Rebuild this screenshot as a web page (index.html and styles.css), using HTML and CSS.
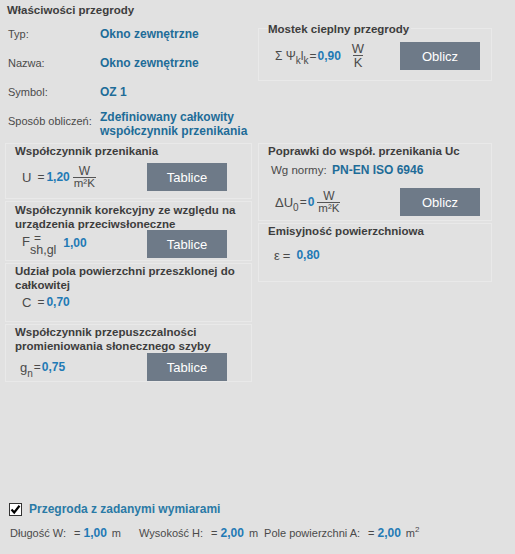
FILE: index.html
```html
<!DOCTYPE html>
<html lang="pl">
<head>
<meta charset="utf-8">
<title>Właściwości przegrody</title>
<link rel="stylesheet" href="styles.css">
</head>
<body>
<div class="page">
  <div class="head">Właściwości przegrody</div>
  <div class="top">
    <div class="props">
      <div class="prow"><span class="lbl">Typ:</span><span class="val">Okno zewnętrzne</span></div>
      <div class="prow"><span class="lbl">Nazwa:</span><span class="val">Okno zewnętrzne</span></div>
      <div class="prow"><span class="lbl">Symbol:</span><span class="val">OZ 1</span></div>
      <div class="prow multi"><span class="lbl">Sposób obliczeń:</span><span class="val">Zdefiniowany całkowity<br>współczynnik przenikania</span></div>
    </div>
    <div class="box mostek">
      <div class="ttl legend">Mostek cieplny przegrody</div>
      <div class="frow">
        <div class="formula">
          <span class="sym msym">Σ Ψ<sub>k</sub>l<sub>k</sub></span><span class="eq tight">=</span><span class="n">0,90</span>
          <span class="frac big"><span class="fn">W</span><span class="fd">K</span></span>
        </div>
        <div class="btn">Oblicz</div>
      </div>
    </div>
  </div>

  <div class="cols">
    <div class="col left">
      <div class="box b1">
        <div class="ttl">Współczynnik przenikania</div>
        <div class="frow">
          <div class="formula">
            <span class="sym">U</span><span class="eq">=</span><span class="n">1,20</span>
            <span class="frac"><span class="fn">W</span><span class="fd">m²K</span></span>
          </div>
          <div class="btn">Tablice</div>
        </div>
      </div>
      <div class="box b2">
        <div class="ttl">Współczynnik korekcyjny ze względu na urządzenia przeciwsłoneczne</div>
        <div class="frow">
          <div class="formula">
            <span class="sym fsym">F</span>
            <span class="stack"><span class="st-eq">=</span><span class="st-sub">sh,gl</span></span>
            <span class="n fval">1,00</span>
          </div>
          <div class="btn">Tablice</div>
        </div>
      </div>
      <div class="box b3">
        <div class="ttl">Udział pola powierzchni przeszklonej do całkowitej</div>
        <div class="frow short">
          <div class="formula">
            <span class="sym">C</span><span class="eq">=</span><span class="n">0,70</span>
          </div>
        </div>
      </div>
      <div class="box b4">
        <div class="ttl">Współczynnik przepuszczalności promieniowania słonecznego szyby</div>
        <div class="frow">
          <div class="formula gform">
            <span class="sym">g<sub class="lowsub">n</sub></span><span class="eq tight">=</span><span class="n">0,75</span>
          </div>
          <div class="btn">Tablice</div>
        </div>
      </div>
    </div>

    <div class="col right">
      <div class="box r1">
        <div class="ttl">Poprawki do współ. przenikania Uc</div>
        <div class="norm"><span class="nlbl">Wg normy:</span><span class="val">PN-EN ISO 6946</span></div>
        <div class="frow">
          <div class="formula">
            <span class="sym">ΔU<sub>0</sub></span><span class="eq tight">=</span><span class="n">0</span>
            <span class="frac"><span class="fn">W</span><span class="fd">m²K</span></span>
          </div>
          <div class="btn">Oblicz</div>
        </div>
      </div>
      <div class="box r2">
        <div class="ttl">Emisyjność powierzchniowa</div>
        <div class="frow short eps">
          <div class="formula">
            <span class="sym">ε</span><span class="eq">=</span><span class="n">0,80</span>
          </div>
        </div>
      </div>
    </div>
  </div>

  <div class="bottom">
    <div class="chkrow">
      <span class="chk"><svg width="11" height="11" viewBox="0 0 11 11"><path d="M1.5 5.5 L4.2 8.5 L9.5 1.8" fill="none" stroke="#000" stroke-width="2.2"/></svg></span>
      <span class="chklbl">Przegroda z zadanymi wymiarami</span>
    </div>
    <div class="dims">
      <span class="dl">Długość W:</span><span class="de">=</span><span class="n">1,00</span><span class="du">m</span>
      <span class="dl dl2">Wysokość H:</span><span class="de">=</span><span class="n">2,00</span><span class="du">m</span>
      <span class="dl dl3">Pole powierzchni A:</span><span class="de">=</span><span class="n">2,00</span><span class="du">m<sup>2</sup></span>
    </div>
  </div>
</div>
</body>
</html>
```

FILE: styles.css
```css
html, body {
  margin: 0;
  padding: 0;
}
body {
  background: #e1e1e1;
  font-family: "Liberation Sans", Arial, sans-serif;
  color: #4a4a4a;
}
.page {
  width: 515px;
  height: 554px;
  display: flex;
  flex-direction: column;
  box-sizing: border-box;
}
.head {
  padding: 3px 7px 0;
  font-size: 11.5px;
  font-weight: bold;
  line-height: 14px;
  color: #3d3d3d;
}
.top {
  display: flex;
  align-items: flex-start;
}
.props {
  width: 253px;
  box-sizing: border-box;
  padding: 2px 0 0 8px;
}
.prow {
  display: grid;
  grid-template-columns: 92px 1fr;
  height: 29px;
  align-items: center;
  line-height: 14px;
}
.prow.multi {
  height: auto;
  align-items: start;
  padding-top: 4px;
}
.prow.multi .lbl {
  padding-top: 4px;
}
.lbl {
  font-size: 11px;
  color: #4a4a4a;
}
.val {
  font-size: 12px;
  font-weight: bold;
  color: #1e6c98;
}
.box {
  border: 1px solid #e9e9e9;
  box-sizing: border-box;
  padding: 0 9px;
}
.ttl {
  font-size: 11.5px;
  font-weight: bold;
  line-height: 14px;
  color: #3d3d3d;
}
.mostek {
  margin: 11px 0 0 5px;
  width: 234px;
  height: 53px;
}
.legend {
  display: block;
  width: fit-content;
  margin-top: -7px;
  background: #e1e1e1;
  padding-right: 2px;
}
.mostek .frow {
  margin-top: 6px;
}
.frow {
  display: flex;
  align-items: center;
  height: 28px;
}
.frow.short {
  height: 20px;
}
.formula {
  width: 132px;
  flex: none;
  box-sizing: border-box;
  padding-left: 7px;
  display: flex;
  align-items: center;
  white-space: nowrap;
}
.sym {
  font-size: 13px;
  color: #4a4a4a;
}
.sym.msym {
  font-size: 12px;
}
.sym.fsym {
  margin-top: -5px;
}
.sym sub {
  font-size: 10px;
  vertical-align: -4px;
  line-height: 0;
}
.sym sub.lowsub {
  vertical-align: -5px;
}
.eq {
  font-size: 12px;
  color: #4a4a4a;
  margin: 0 2px 0 6px;
}
.eq.tight {
  margin: 0 1px 0 1px;
}
.n {
  font-size: 12px;
  font-weight: bold;
  color: #1f7ab5;
}
.frac {
  display: inline-flex;
  flex-direction: column;
  align-items: center;
  font-size: 12px;
  line-height: 11px;
  color: #4a4a4a;
  margin-left: 3px;
}
.frac .fn {
  padding: 0 2px;
}
.frac .fd {
  border-top: 1px solid #555;
  padding: 0 1px;
  font-size: 11.5px;
}
.frac.big {
  font-size: 13px;
  line-height: 12px;
  margin-left: 9px;
}
.frac.big .fd {
  font-size: 13px;
  padding-top: 1px;
}
.btn {
  width: 80px;
  height: 28px;
  background: #6e7a88;
  color: #ffffff;
  font-size: 13px;
  display: flex;
  align-items: center;
  justify-content: center;
  flex: none;
}
.cols {
  display: flex;
  margin-top: 5px;
  padding-left: 5px;
}
.col {
  display: flex;
  flex-direction: column;
  gap: 2px;
}
.col.left {
  width: 247px;
}
.col.right {
  width: 234px;
  margin-left: 6px;
}
.b1 { height: 56px; }
.b1 .frow { margin-top: 5px; }
.b2 { height: 60px; }
.b2 .ttl { padding-top: 1px; }
.b2 .frow { margin-top: -1px; }
.b3 { height: 59px; }
.b4 { height: 58px; }
.stack {
  display: inline-flex;
  flex-direction: column;
  margin-left: 0;
  font-size: 12px;
  color: #4a4a4a;
}
.st-eq {
  line-height: 12px;
  padding-left: 4px;
}
.st-sub {
  line-height: 13px;
  font-size: 12.5px;
}
.fval {
  margin-left: 7px;
  margin-top: -3px;
}
.gform {
  padding-left: 5px;
}
.r1 { height: 78px; }
.norm {
  margin-top: 5px;
  line-height: 14px;
  padding-left: 3px;
  display: flex;
}
.nlbl {
  font-size: 11.5px;
  color: #4a4a4a;
  width: 61px;
}
.r1 .frow { margin-top: 11px; }
.r2 { height: 59px; }
.eps { margin-top: 7px; }
.eps .formula { padding-left: 6px; }
.eps .eq { margin: 0 6px 0 3px; font-size: 13px; }
.bottom {
  margin-top: auto;
  padding: 0 0 14px 9px;
}
.chkrow {
  display: flex;
  align-items: center;
  height: 16px;
}
.chk {
  width: 13px;
  height: 13px;
  box-sizing: border-box;
  border: 1px solid #333;
  background: #fff;
  display: flex;
  align-items: center;
  justify-content: center;
}
.chklbl {
  margin-left: 7px;
  font-size: 12px;
  font-weight: bold;
  color: #2a7aa6;
}
.dims {
  margin-top: 9px;
  line-height: 14px;
  font-size: 11px;
  padding-left: 1px;
  display: flex;
  align-items: baseline;
}
.dl { color: #4a4a4a; }
.de { margin: 0 3px 0 8px; }
.du { margin-left: 5px; }
.du sup { font-size: 8px; vertical-align: 5px; line-height: 0; }
.dl2 { margin-left: 18px; }
.dl3 { margin-left: 6px; }
```
